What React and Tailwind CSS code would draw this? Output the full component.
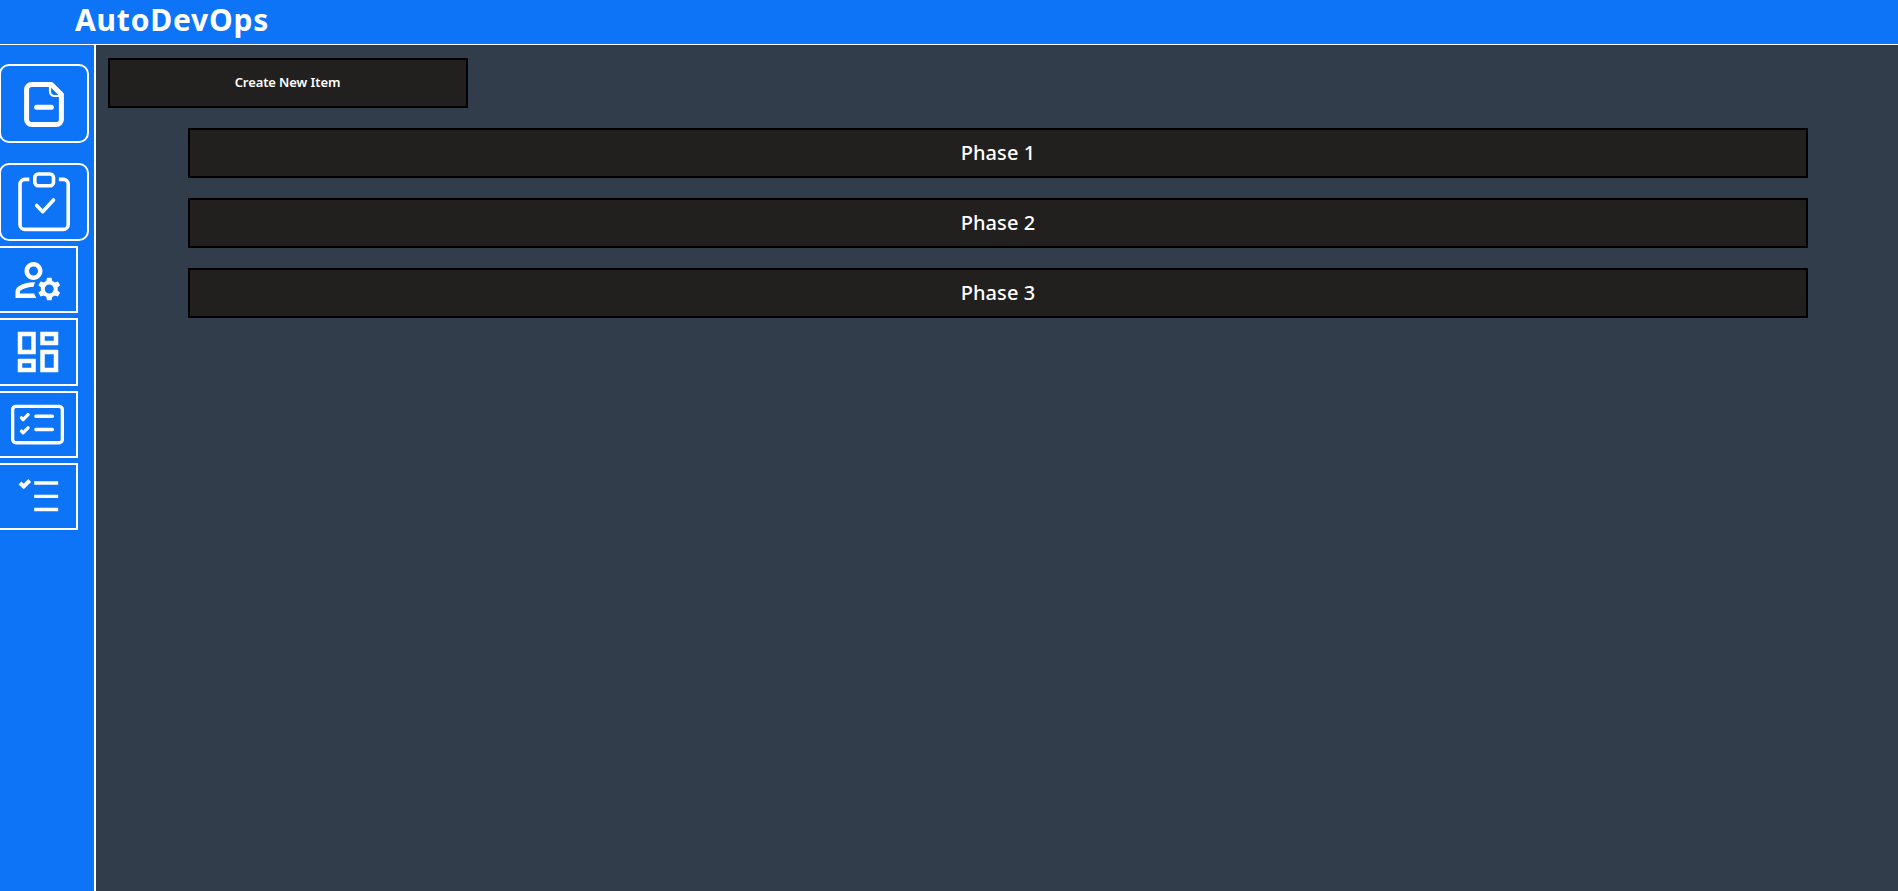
import React from "react";
import { MdOutlineManageAccounts, MdOutlineDashboard } from "react-icons/md";
import { BsCardChecklist } from "react-icons/bs";

function FileIcon() {
  return (
    <svg className="mt-px" width="40" height="45" viewBox="0 0 40 45" fill="none" stroke="currentColor" strokeLinecap="round" strokeLinejoin="round">
      <path d="M27.4 2.5H7.6a5 5 0 0 0-5 5v30a5 5 0 0 0 5 5h24.8a5 5 0 0 0 5-5V12.5z" strokeWidth="5" />
      <path d="M26 3v6.500a4.500 4.500 0 0 0 4.500 4.500H38" strokeWidth="2.200" />
      <path d="M12.600 25.300h14.800" strokeWidth="5" />
    </svg>
  );
}

function ClipboardIcon() {
  return (
    <svg width="52" height="60" viewBox="0 0 52 60" fill="none" stroke="currentColor" strokeLinecap="round" strokeLinejoin="round" strokeWidth="3.600">
      <path d="M11.300 7.400H7a5 5 0 0 0-5 5v40a5 5 0 0 0 5 5h38.200a5 5 0 0 0 5-5v-40a5 5 0 0 0-5-5h-4.300" strokeLinecap="butt" />
      <rect x="16.800" y="2" width="18.700" height="11.800" rx="3.500" />
      <path d="M18.700 33.500l6 6.200L35.500 28" />
    </svg>
  );
}

function ListIcon() {
  return (
    <svg width="54" height="54" viewBox="0 0 54 54" fill="none" stroke="currentColor">
      <path d="M23.200 14h24M23.200 27.300h24M23.200 40.500h24" strokeWidth="3.300" />
      <path d="M9 14l3.700 3.500 6-6" strokeWidth="4" />
    </svg>
  );
}

function RoundButton({ label, className, children }) {
  return (
    <button aria-label={label} className={`-ml-px flex w-[90px] items-center justify-center rounded-[10px] border-2 border-white ${className}`}>
      {children}
    </button>
  );
}

function SquareButton({ label, children }) {
  return (
    <button aria-label={label} className="-ml-[3px] flex h-[67.25px] w-[81px] items-center justify-center border-2 border-white">
      {children}
    </button>
  );
}

const phases = ["Phase 1", "Phase 2", "Phase 3"];

export default function App() {
  return (
    <div className="flex h-screen flex-col overflow-hidden bg-[#323d4b] font-['Lucida_Sans','Noto_Sans',sans-serif] text-white">
      <header className="flex h-[45px] shrink-0 items-center border-b border-white bg-[#0d74f7] pb-1 pl-[75px]">
        <h1 className="text-[30px] leading-none font-bold tracking-[0.8px]">AutoDevOps</h1>
      </header>
      <div className="flex min-h-0 flex-1">
        <aside className="flex w-24 shrink-0 flex-col border-r-2 border-white bg-[#0d74f7] pt-[19px]">
          <RoundButton label="Items" className="h-[79px]"><FileIcon /></RoundButton>
          <RoundButton label="Tasks" className="mt-5 h-[78px]"><ClipboardIcon /></RoundButton>
          <nav className="mt-1 flex flex-col gap-[5px] pt-px">
            <SquareButton label="Accounts"><MdOutlineManageAccounts size={54} /></SquareButton>
            <SquareButton label="Dashboard"><MdOutlineDashboard size={54} /></SquareButton>
            <SquareButton label="Checklist"><BsCardChecklist size={53} /></SquareButton>
            <SquareButton label="List"><ListIcon /></SquareButton>
          </nav>
        </aside>
        <main className="flex flex-1 flex-col gap-5 pt-[13px] pr-[90px] pl-3">
          <button className="flex h-[50px] w-[360px] items-center justify-center border-2 border-black bg-[#21201e] pr-px text-[13px] font-semibold tracking-[-0.1px]">
            Create New Item
          </button>
          {phases.map((phase) => (
            <section key={phase} className="ml-20 flex h-[50px] items-center justify-center border-2 border-black bg-[#21201e] text-xl font-medium tracking-[0.1px]">
              {phase}
            </section>
          ))}
        </main>
      </div>
    </div>
  );
}
